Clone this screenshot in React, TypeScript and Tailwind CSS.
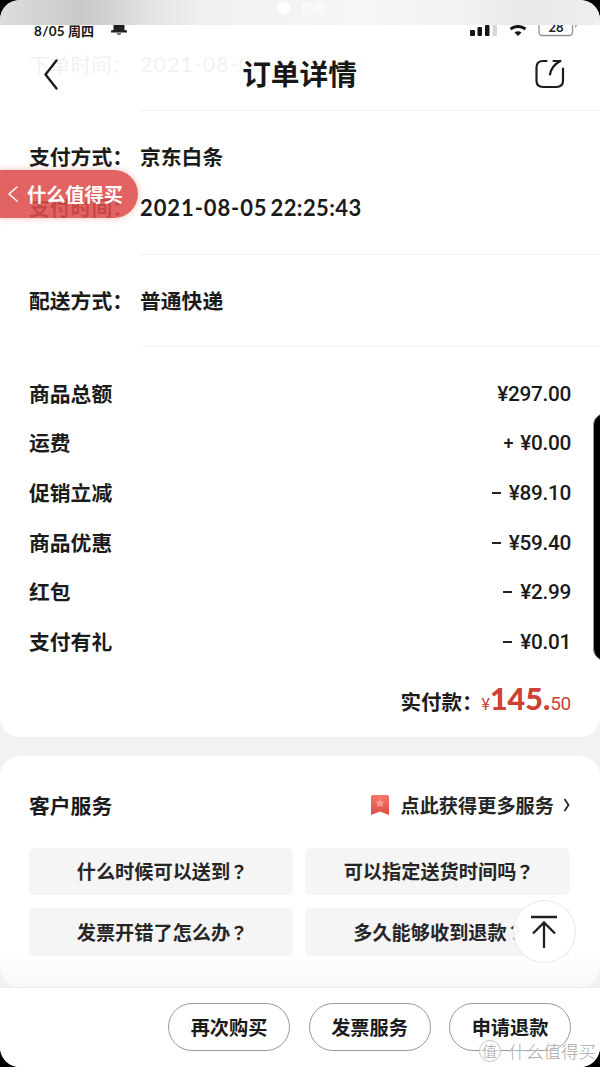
import React from "react";

const CJK = "font-['Noto_Sans_CJK_SC',sans-serif]";
const LATO = "font-['Lato','Noto_Sans_CJK_SC',sans-serif]";

const amounts = [
  { label: "商品总额", sign: "", value: "¥297.00" },
  { label: "运费", sign: "+", value: "¥0.00" },
  { label: "促销立减", sign: "-", value: "¥89.10" },
  { label: "商品优惠", sign: "-", value: "¥59.40" },
  { label: "红包", sign: "-", value: "¥2.99" },
  { label: "支付有礼", sign: "-", value: "¥0.01" },
];

function StatusBar() {
  return (
    <div className="flex h-[15px] items-start overflow-hidden text-[#181818]">
      <div className="flex w-full">
        <span className={`ml-[34px] mt-[-2px] flex h-[17px] w-[60px] items-center whitespace-nowrap text-[14px] font-bold leading-[17px] ${LATO}`}>
          <span className="w-[34px] text-[13.5px] tracking-[0.3px]">8/05</span>
          <span className="text-[13px]">周四</span>
        </span>
        <svg className="ml-[17px]" width="16" height="11" viewBox="0 0 16 11">
          <path d="M2.5 0H13.5V5L16 5.500V7.500H0V5.500L2.500 5Z" fill="#202124" />
          <path d="M5.500 8H10.500Q10 10.300 8 10.300T5.500 8Z" fill="#777" />
        </svg>
        <svg className="ml-[343px]" width="110" height="13" viewBox="0 0 110 13">
          <g fill="#151515">
            <rect x="0" y="5" width="5" height="6" rx="1" />
            <rect x="7.500" y="2" width="4.500" height="9" rx="1" />
            <rect x="15" y="0" width="4.500" height="11" rx="1" />
          </g>
          <rect x="22.500" y="0" width="4.500" height="11" fill="#d8d8d8" />
          <path d="M40.500 4Q48 -1 55.500 4" fill="none" stroke="#151515" strokeWidth="3" />
          <path d="M44.500 7.500Q48 4.800 51.500 7.500L48 11Z" fill="#151515" />
          <path d="M69 -2V7Q69 10.500 72.500 10.500H99Q102.500 10.500 102.500 7V-2" fill="none" stroke="#929292" strokeWidth="1.300" />
          <path d="M105 0V3Q107 2 107 0Z" fill="#aaa" />
          <text x="86" y="6.500" textAnchor="middle" fontFamily="Lato" fontSize="13" fontWeight="700" fill="#222">28</text>
        </svg>
      </div>
    </div>
  );
}

function Header() {
  return (
    <div className="relative h-[70px]">
      <div className={`absolute left-[29px] top-[9px] flex h-[30px] w-[340px] items-center whitespace-nowrap text-[20.700px] leading-[30px] text-[#f1f1f1] ${CJK}`}>
        <span className="flex w-[111px]">下单时间<span>：</span></span>
        <span className="bg-[linear-gradient(90deg,#f0f0f0_40%,#fbfbfb_60%)] bg-clip-text font-['Lato'] text-[21.500px] tracking-[1px] text-transparent">2021-08-05 22:25:36</span>
      </div>
      <div className="relative flex h-[70px] items-center justify-between pl-[43px] pr-[34px]">
        <svg className="mb-[3px]" width="18" height="34" viewBox="0 0 18 34" fill="none" stroke="#1c1c1c" strokeWidth="2.400" strokeLinecap="round" strokeLinejoin="round">
          <path d="M13.500 3.500L2.500 17.500L13.500 31.500" />
        </svg>
        <h1 className={`mb-[5px] ml-[4px] text-[28.700px] font-bold leading-[40px] text-[#181818] ${CJK}`}>订单详情</h1>
        <svg className="mb-[2px]" width="32" height="32" viewBox="0 0 32 32" fill="none" stroke="#1c1c1c" strokeWidth="2.200" strokeLinecap="round" strokeLinejoin="round">
          <path d="M12.500 3H9Q2.500 3 2.500 9.500V22.500Q2.500 29 9 29H22.500Q29 29 29 22.500V10.500" />
          <path d="M19.500 3H26.500Q17.500 7.500 16 16.500" />
        </svg>
      </div>
    </div>
  );
}

function InfoRow({ label, children }: { label: string; children: React.ReactNode }) {
  return (
    <div className={`flex h-[51px] items-center whitespace-nowrap pl-[29px] text-[20.800px] font-bold ${CJK}`}>
      <span className="flex w-[111px] shrink-0">{label}<span>：</span></span>
      {children}
    </div>
  );
}

function PaymentSection() {
  return (
    <section className="relative h-[143px] pt-[20px]">
      <InfoRow label="支付方式">京东白条</InfoRow>
      <InfoRow label="支付时间">
        <span className="font-['Lato'] text-[22px] tracking-[0.900px]">2021-08-05</span>
        <span className="ml-[3px] font-['Lato'] text-[22px] tracking-[0.400px]">22:25:43</span>
      </InfoRow>
      <div className={`absolute left-0 top-[59px] flex h-[48px] w-[138px] items-center rounded-r-full bg-[#de4f4c]/88 pl-[7px] text-white shadow-[0_0_7px_rgba(220,70,65,0.35)] ${CJK}`}>
        <svg width="12" height="18" viewBox="0 0 12 18" fill="none" stroke="white" strokeWidth="1.500" strokeLinecap="round" strokeLinejoin="round">
          <path d="M10 2L2 9L10 16" />
        </svg>
        <span className="ml-[8px] whitespace-nowrap text-[19.200px] font-bold">什么值得买</span>
      </div>
    </section>
  );
}

function Divider() {
  return <div className="ml-[140px] h-px shrink-0 bg-[#f1f1f1]" />;
}

function SideNotch() {
  return <div className="absolute right-[-17px] top-[413px] h-[248px] w-[24px] rounded-[14px] border border-[#999] bg-black" />;
}

function Bookmark() {
  return (
    <svg width="18" height="21" viewBox="0 0 18 21">
      <defs>
        <linearGradient id="bookmark" x2="0" y2="1">
          <stop stopColor="#f6786b" />
          <stop offset="1" stopColor="#dc4b46" />
        </linearGradient>
      </defs>
      <path d="M1.500 0H16.500Q18 0 18 1.500V20L9 16.500L0 20V1.500Q0 0 1.500 0Z" fill="url(#bookmark)" />
      <path d="M9 3.500L10.400 6.500L13.600 6.800L11.200 9L11.900 12.200L9 10.500L6.100 12.200L6.800 9L4.400 6.800L7.600 6.500Z" fill="#ff9d8d" />
    </svg>
  );
}

function Question({ children }: { children: React.ReactNode }) {
  return (
    <button className="flex h-[47.500px] items-center justify-center whitespace-nowrap rounded-[5px] bg-[#f5f5f5] pl-[3px] pt-[1px] text-[19.200px] font-bold text-[#262626]">
      {children}
      <span className="ml-[-0.500px] mr-[0.500px] font-['Noto_Sans_CJK_TC',sans-serif] text-[18px] font-bold">？</span>
    </button>
  );
}

function Action({ children }: { children: React.ReactNode }) {
  return <button className="h-[48px] w-[122px] rounded-full border border-[#999] text-[19.200px] font-bold leading-[46px]">{children}</button>;
}

export default function App() {
  return (
    <div className="h-[1067px] w-[600px] overflow-hidden bg-black">
      <main className={`relative flex h-[1067px] flex-col overflow-hidden rounded-[20px] bg-[#f2f2f2] text-[#1b1b1b] ${CJK}`}>
        <div className="flex h-[25px] shrink-0 items-start bg-[linear-gradient(90deg,#ddd_0%,#c9c9ca_13%,#cfcfd0_17%,#e3e3e5_25%,#f0f0f2_34%,#f5f6f8_60%,#f0f1f3_78%,#e9e9eb_87%,#eeeef0_100%)] pl-[277px]">
          <div className="mt-[1px] h-[13px] w-[13px] rounded-full bg-white blur-[1px]" />
          <span className="ml-[11px] text-[12px] leading-[16px] text-white/80">值得</span>
        </div>
        <div className="h-[712px] shrink-0 rounded-b-[20px] bg-white">
          <StatusBar />
          <Header />
          <Divider />
          <PaymentSection />
          <Divider />
          <div className="h-[91px] pt-[20px]"><InfoRow label="配送方式">普通快递</InfoRow></div>
          <Divider />
          <section className="px-[29px] pt-[21px]">
            {amounts.map((item) => (
              <div key={item.label} className="flex h-[49.600px] items-center justify-between">
                <span className="text-[20.800px] font-bold leading-[30px]">{item.label}</span>
                <span className="mt-[2px] flex items-center font-['Roboto'] text-[20.800px] font-medium leading-[30px] tracking-[-0.300px]">
                  {item.sign === "-" ? <span className="mr-[8px] h-[2px] w-[9px] bg-[#222]" /> : item.sign && <span className="mr-[7px] text-[18px]">{item.sign}</span>}
                  {item.value}
                </span>
              </div>
            ))}
            <div className="mt-[12px] flex h-[40px] items-baseline justify-end whitespace-nowrap leading-[40px]">
              <span className="mr-[-1px] text-[20.500px] font-bold">实付款：</span>
              <span className="font-['Roboto'] text-[16px] text-[#cf4035]">¥</span>
              <span className="font-['Lato'] text-[30.500px] font-black text-[#cf4035]">145.</span>
              <span className="font-['Roboto'] text-[19px] tracking-[-0.300px] text-[#cf4035]">50</span>
            </div>
          </section>
        </div>
        <section className="mt-[19px] h-[231px] shrink-0 rounded-[20px] bg-[linear-gradient(180deg,#fff_0%,#fff_86%,#f7f7f7_100%)] pl-[29px] pr-[30px] pt-[32px]">
          <div className="flex h-[35px] items-center justify-between">
            <h2 className="text-[20.800px] font-bold">客户服务</h2>
            <div className="flex items-center whitespace-nowrap text-[19.200px] font-bold text-[#262626]">
              <Bookmark />
              <span className="ml-[12px]">点此获得更多服务</span>
              <svg className="ml-[9px]" width="7" height="16" viewBox="0 0 7 16" fill="none" stroke="#222" strokeWidth="1.700">
                <path d="M1.500 2L5.500 8L1.500 14" />
              </svg>
            </div>
          </div>
          <div className="mt-[24.500px] grid grid-cols-[264px_265px] gap-x-[12px] gap-y-[13px]">
            <Question>什么时候可以送到</Question>
            <Question>可以指定送货时间吗</Question>
            <Question>发票开错了怎么办</Question>
            <Question>多久能够收到退款</Question>
          </div>
        </section>
        <footer className="relative flex h-[80px] shrink-0 justify-end gap-[18.500px] border-t border-[#eee] bg-white pr-[29px] pt-[15px]">
          <Action>再次购买</Action>
          <Action>发票服务</Action>
          <Action>申请退款</Action>
          <div className="absolute right-[4px] top-[51px] flex h-[24px] items-center gap-[8px] text-[#aaa]">
            <span className="flex h-[22px] w-[22px] items-center justify-center rounded-full border border-[#c6c6c6] bg-white/60 text-[15px] font-light">值</span>
            <span className="whitespace-nowrap text-[17.500px] font-light [text-shadow:0_0_2px_white,0_0_3px_white]">什么值得买</span>
          </div>
        </footer>
        <button className="absolute left-[513px] top-[900px] flex h-[63px] w-[63px] items-center justify-center rounded-full border border-[#e9e9e9] bg-white/95">
          <svg className="mr-[1px]" width="28" height="34" viewBox="0 0 28 34" fill="none" stroke="#202020" strokeWidth="2.300">
            <path d="M1 2H27M14 33V8M3 18.500L14 7.500L25 18.500" />
          </svg>
        </button>
        <SideNotch />
      </main>
    </div>
  );
}
